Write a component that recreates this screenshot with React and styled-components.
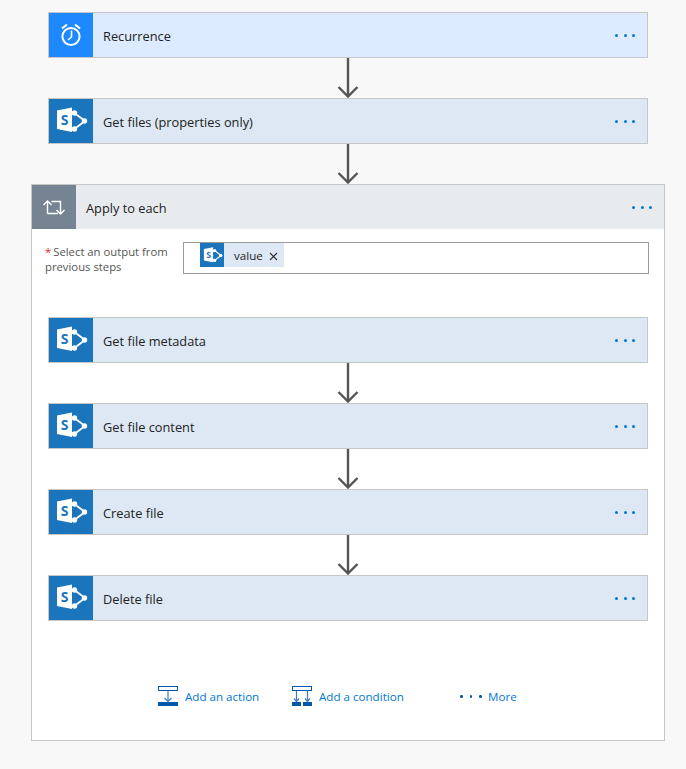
import React from 'react';
import styled, {createGlobalStyle} from 'styled-components';

const GlobalStyle = createGlobalStyle`
  html, body {
    margin: 0;
    padding: 0;
    background: #f8f8f8;
  }

  body {
    font-family: "Open Sans", "Noto Sans", "Liberation Sans", sans-serif;
    color: #222;
  }
`;

function SharePointIcon({size = 44}) {
    return <svg width={size} height={size} viewBox="0 0 44 44" style={{flex: 'none'}}>
        <path d="M22 14.5 L26 14.5 L36 22 L26 29.5 L22 29.5" fill="none" stroke="#fff" strokeWidth="1.8"/>
        <circle cx="25.5" cy="14" r="2.7" fill="#fff"/>
        <circle cx="25.5" cy="30" r="2.7" fill="#fff"/>
        <circle cx="35.5" cy="22" r="2.7" fill="#fff"/>
        <path d="M8 11.5 L23 8.5 L23 33 L8 30 Z" fill="#fff"/>
        <text x="15.5" y="26" textAnchor="middle" fontSize="14" fontWeight="700" fontFamily="Open Sans, sans-serif" fill="#1b75bc">S</text>
    </svg>;
}

function ClockIcon() {
    return <svg width="44" height="44" viewBox="0 0 44 44" fill="none" stroke="#fff">
        <circle cx="22" cy="23.5" r="8.6" strokeWidth="2"/>
        <path d="M22.5 17.5 L22.5 24 L19 27" strokeWidth="1.6"/>
        <path d="M13 15.5 L18 11.5 M31 15.5 L26 11.5" strokeWidth="2.2"/>
    </svg>;
}

function LoopIcon() {
    return <svg width="44" height="44" viewBox="0 0 44 44" fill="none" stroke="#fff" strokeWidth="1.4">
        <path d="M15.5 28.5 L15.5 16 M11.5 20 L15.5 16 L19.5 20 M15.5 28.5 L26 28.5"/>
        <path d="M19.5 16.5 L28.5 16.5 L28.5 29 M24.5 25 L28.5 29 L32.5 25"/>
    </svg>;
}

function ArrowIcon() {
    return <svg width="24" height="40" viewBox="0 0 24 40" fill="none" stroke="#555" strokeWidth="2.4">
        <path d="M12 0 L12 38 M2.5 29 L12 38.5 L21.5 29"/>
    </svg>;
}

function AddActionIcon() {
    return <svg width="20" height="21" viewBox="0 0 20 21">
        <rect x="0.5" y="0.5" width="19" height="4" fill="none" stroke="#0058ad"/>
        <path d="M10 5 L10 15.5 M6.5 12 L10 15.5 L13.5 12" fill="none" stroke="#3f7dbd" strokeWidth="1.2"/>
        <rect x="0" y="16" width="20" height="4" fill="#0058ad"/>
    </svg>;
}

function AddConditionIcon() {
    return <svg width="20" height="21" viewBox="0 0 20 21">
        <rect x="0.5" y="0.5" width="19" height="4" fill="none" stroke="#0058ad"/>
        <path d="M4.5 5 L4.5 15.5 M2 12.5 L4.5 15.5 L7 12.5 M15.5 5 L15.5 15.5 M13 12.5 L15.5 15.5 L18 12.5" fill="none" stroke="#3f7dbd" strokeWidth="1.2"/>
        <rect x="0" y="16" width="9" height="4" fill="#0058ad"/>
        <rect x="11" y="16" width="9" height="4" fill="#0058ad"/>
    </svg>;
}

function CloseIcon() {
    return <svg width="9" height="9" viewBox="0 0 9 9" fill="none" stroke="#333" strokeWidth="1.2">
        <path d="M1 1 L8 8 M8 1 L1 8"/>
    </svg>;
}

function Dots() {
    return <DotRow><Dot/><Dot/><Dot/></DotRow>;
}

function Step({title, tone = 'sharepoint', icon}) {
    return <Card $tone={tone}>
        <CardIcon $tone={tone}>{icon || <SharePointIcon/>}</CardIcon>
        <CardTitle>{title}</CardTitle>
        <Dots/>
    </Card>;
}

const innerSteps = ['Get file metadata', 'Get file content', 'Create file', 'Delete file'];

function App() {
    return <Page>
        <GlobalStyle/>
        <Step title="Recurrence" tone="recurrence" icon={<ClockIcon/>}/>
        <Connector><ArrowIcon/></Connector>
        <Step title="Get files (properties only)"/>
        <Connector><ArrowIcon/></Connector>

        <Loop>
            <Card $tone="loop" $flush>
                <CardIcon $tone="loop"><LoopIcon/></CardIcon>
                <CardTitle>Apply to each</CardTitle>
                <Dots/>
            </Card>

            <LoopBody>
                <OutputRow>
                    <OutputLabel>
                        <LabelLine><Required>*</Required><span>Select an output from</span></LabelLine>
                        <LabelLine>previous steps</LabelLine>
                    </OutputLabel>
                    <OutputInput>
                        <Chip>
                            <ChipIcon><SharePointIcon size={27}/></ChipIcon>
                            <ChipText>value</ChipText>
                            <ChipClose><CloseIcon/></ChipClose>
                        </Chip>
                    </OutputInput>
                </OutputRow>

                <Steps>
                    {innerSteps.map((title, index) => (
                        <React.Fragment key={title}>
                            {index > 0 && <Connector><ArrowIcon/></Connector>}
                            <Step title={title}/>
                        </React.Fragment>
                    ))}
                </Steps>

                <Actions>
                    <Action $width={134}><AddActionIcon/><ActionLabel>Add an action</ActionLabel></Action>
                    <Action $width={168}><AddConditionIcon/><ActionLabel>Add a condition</ActionLabel></Action>
                    <Action><MoreDots><Dot/><Dot/><Dot/></MoreDots><ActionLabel>More</ActionLabel></Action>
                </Actions>
            </LoopBody>
        </Loop>
    </Page>;
}

const Page = styled.div`
  display: flex;
  flex-direction: column;
  align-items: flex-start;
  width: 686px;
  height: 769px;
  box-sizing: border-box;
  padding: 12px 0 0 48px;
  overflow: hidden;
`;

const tones = {
    recurrence: {bg: '#dcebff', icon: '#1e88ff'},
    sharepoint: {bg: '#dde8f4', icon: '#1b75bc'},
    loop: {bg: '#e8ebee', icon: '#758392'},
};

const Card = styled.div`
  display: flex;
  align-items: center;
  box-sizing: border-box;
  width: ${p => p.$flush ? '100%' : '600px'};
  height: ${p => p.$flush ? '44px' : '46px'};
  border: ${p => p.$flush ? 'none' : '1px solid #c6c6c6'};
  background: ${p => tones[p.$tone].bg};
`;

const CardIcon = styled.div`
  display: flex;
  align-items: center;
  justify-content: center;
  flex: none;
  width: 44px;
  height: 44px;
  background: ${p => tones[p.$tone].icon};
`;

const CardTitle = styled.div`
  flex: 1;
  padding: 2px 0 0 10px;
  font-size: 12.8px;
  color: #222;
`;

const DotRow = styled.div`
  display: flex;
  gap: 5.3px;
  margin: 1px 12px 0 0;
`;

const Dot = styled.span`
  display: block;
  width: 3px;
  height: 3px;
  border-radius: 50%;
  background: #0078d7;
`;

const Connector = styled.div`
  display: flex;
  justify-content: center;
  width: 600px;
  height: 40px;
`;

const Loop = styled.div`
  box-sizing: border-box;
  width: 634px;
  height: 557px;
  margin-left: -17px;
  border: 1px solid #c6c6c6;
  background: #fff;
`;

const LoopBody = styled.div`
  display: flex;
  flex-direction: column;
  padding: 13px 16px 0;
`;

const OutputRow = styled.div`
  display: flex;
  margin-left: -3px;
`;

const OutputLabel = styled.div`
  flex: none;
  width: 138px;
  padding-top: 2px;
  font-size: 11.3px;
  line-height: 15px;
  color: #555;
`;

const LabelLine = styled.div`
  white-space: nowrap;
`;

const Required = styled.span`
  margin-right: 2px;
  color: #d9262a;
`;

const OutputInput = styled.div`
  box-sizing: border-box;
  display: flex;
  flex: none;
  width: 466px;
  height: 32px;
  padding-left: 16px;
  border: 1px solid #999;
`;

const Chip = styled.div`
  display: flex;
  align-items: center;
  height: 24px;
  background: #dde8f4;
`;

const ChipIcon = styled.div`
  display: flex;
  align-items: center;
  justify-content: center;
  width: 24px;
  height: 24px;
  overflow: hidden;
  background: #1b75bc;
`;

const ChipText = styled.span`
  margin-left: 10px;
  padding-top: 1px;
  font-size: 11.6px;
  color: #222;
`;

const ChipClose = styled.span`
  display: flex;
  margin: 2px 6px 0 6px;
`;

const Steps = styled.div`
  display: flex;
  flex-direction: column;
  margin-top: 43px;
`;

const Actions = styled.div`
  display: flex;
  align-items: center;
  margin-top: 65px;
  padding-left: 110px;
`;

const Action = styled.div`
  display: flex;
  align-items: center;
  gap: 6.5px;
  width: ${p => p.$width ? p.$width + 'px' : 'auto'};

  &:first-child svg,
  &:nth-child(2) svg {
    margin-right: 0.5px;
  }
`;

const ActionLabel = styled.span`
  font-size: 11.6px;
  color: #0078d7;
`;

const MoreDots = styled.div`
  display: flex;
  gap: 7px;

  span {
    width: 2.5px;
    height: 2.5px;
    background: #0058ad;
  }
`;

export default App;
